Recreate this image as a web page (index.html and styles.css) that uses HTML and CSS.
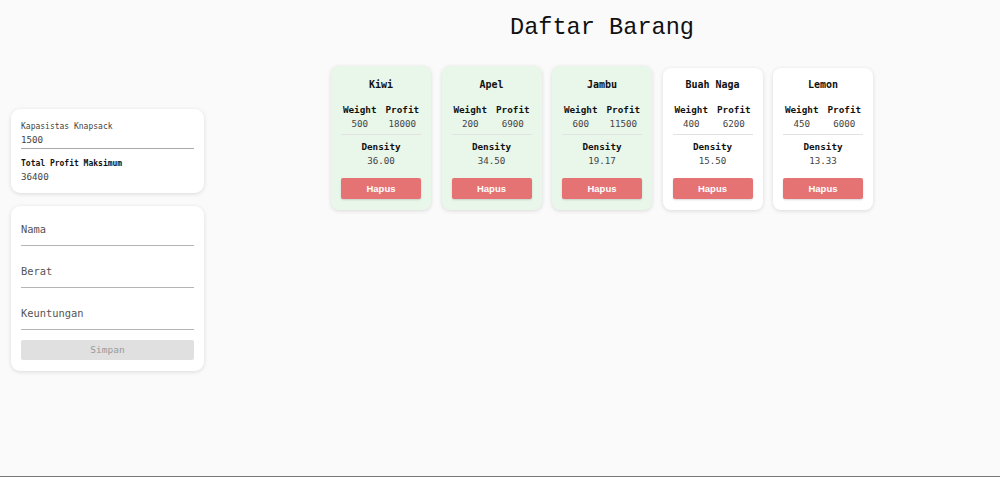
FILE: index.html
```html
<!DOCTYPE html>
<html lang="id">
<head>
<meta charset="utf-8">
<title>Daftar Barang</title>
<link rel="stylesheet" href="styles.css">
</head>
<body>
<div class="page">
  <aside class="side">
    <div class="panel summary">
      <div class="sum-label">Kapasistas Knapsack</div>
      <div class="sum-value underlined">1500</div>
      <div class="sum-label strong">Total Profit Maksimum</div>
      <div class="sum-value">36400</div>
    </div>
    <div class="panel form">
      <input class="field" type="text" placeholder="Nama">
      <input class="field" type="text" placeholder="Berat">
      <input class="field" type="text" placeholder="Keuntungan">
      <button class="save" disabled>Simpan</button>
    </div>
  </aside>
  <main class="main">
    <h1 class="title">Daftar Barang</h1>
    <div class="cards">
      <div class="card picked">
        <div class="card-title">Kiwi</div>
        <div class="stats">
          <div class="stat"><div class="stat-label">Weight</div><div class="stat-value">500</div></div>
          <div class="stat"><div class="stat-label">Profit</div><div class="stat-value">18000</div></div>
        </div>
        <div class="density"><div class="stat-label">Density</div><div class="stat-value">36.00</div></div>
        <button class="del">Hapus</button>
      </div>
      <div class="card picked">
        <div class="card-title">Apel</div>
        <div class="stats">
          <div class="stat"><div class="stat-label">Weight</div><div class="stat-value">200</div></div>
          <div class="stat"><div class="stat-label">Profit</div><div class="stat-value">6900</div></div>
        </div>
        <div class="density"><div class="stat-label">Density</div><div class="stat-value">34.50</div></div>
        <button class="del">Hapus</button>
      </div>
      <div class="card picked">
        <div class="card-title">Jambu</div>
        <div class="stats">
          <div class="stat"><div class="stat-label">Weight</div><div class="stat-value">600</div></div>
          <div class="stat"><div class="stat-label">Profit</div><div class="stat-value">11500</div></div>
        </div>
        <div class="density"><div class="stat-label">Density</div><div class="stat-value">19.17</div></div>
        <button class="del">Hapus</button>
      </div>
      <div class="card">
        <div class="card-title">Buah Naga</div>
        <div class="stats">
          <div class="stat"><div class="stat-label">Weight</div><div class="stat-value">400</div></div>
          <div class="stat"><div class="stat-label">Profit</div><div class="stat-value">6200</div></div>
        </div>
        <div class="density"><div class="stat-label">Density</div><div class="stat-value">15.50</div></div>
        <button class="del">Hapus</button>
      </div>
      <div class="card">
        <div class="card-title">Lemon</div>
        <div class="stats">
          <div class="stat"><div class="stat-label">Weight</div><div class="stat-value">450</div></div>
          <div class="stat"><div class="stat-label">Profit</div><div class="stat-value">6000</div></div>
        </div>
        <div class="density"><div class="stat-label">Density</div><div class="stat-value">13.33</div></div>
        <button class="del">Hapus</button>
      </div>
    </div>
  </main>
</div>
</body>
</html>
```

FILE: styles.css
```css
html, body {
  margin: 0;
  padding: 0;
  background: #fafafa;
  font-family: "DejaVu Sans Mono", "Liberation Mono", monospace;
  color: #111;
}

.page {
  display: flex;
  height: 100vh;
  box-sizing: border-box;
  border-bottom: 1px solid #777;
}

.side {
  width: 204px;
  flex: none;
  box-sizing: border-box;
  padding-left: 11px;
  padding-top: 3px;
  display: flex;
  flex-direction: column;
  justify-content: center;
  gap: 13px;
}

.panel {
  width: 193px;
  box-sizing: border-box;
  background: #fff;
  border-radius: 9px;
  box-shadow: 0 1px 4px rgba(0, 0, 0, 0.13);
}

.summary {
  padding: 13px 10px 10px;
}

.sum-label {
  font-size: 8px;
  line-height: 10px;
  color: #444;
}

.sum-label.strong {
  font-weight: bold;
  color: #111;
  margin-top: 10px;
}

.sum-value {
  font-size: 9.2px;
  line-height: 12px;
  color: #444;
  margin-top: 2px;
}

.sum-value.underlined {
  padding-bottom: 2px;
  border-bottom: 1px solid #aaa;
}

.form {
  padding: 7px 10px 11px;
  display: flex;
  flex-direction: column;
  gap: 9px;
}

.field {
  display: block;
  width: 100%;
  box-sizing: border-box;
  border: none;
  border-bottom: 1px solid #b5b5b5;
  background: transparent;
  padding: 10px 0 9px;
  margin: 0;
  font-family: inherit;
  font-size: 10.4px;
  line-height: 13px;
  height: 33px;
  color: #333;
  outline: none;
}

.field::placeholder {
  color: #555;
}

.save {
  margin-top: 1px;
  height: 20px;
  border: none;
  border-radius: 2px;
  background: #e0e0e0;
  color: #9a9a9a;
  font-family: inherit;
  font-size: 9.5px;
  padding: 0;
}

.main {
  flex: 1;
  display: flex;
  flex-direction: column;
  align-items: center;
}

.title {
  margin: 14px 0 0;
  font-family: "Liberation Mono", "DejaVu Sans Mono", monospace;
  font-weight: normal;
  font-size: 23.6px;
  line-height: 28px;
  color: #111;
}

.cards {
  margin-top: 24px;
  display: flex;
  align-items: flex-end;
  gap: 10.5px;
}

.card {
  width: 100px;
  box-sizing: border-box;
  padding: 11px 10px 11px;
  background: #fff;
  border-radius: 8px;
  box-shadow: 0 1px 4px rgba(0, 0, 0, 0.13);
  text-align: center;
}

.card.picked {
  background: #e9f6ea;
  padding-top: 13px;
}

.card-title {
  font-size: 10px;
  font-weight: bold;
  line-height: 12px;
}

.stats {
  margin-top: 13px;
  display: flex;
  justify-content: center;
  gap: 9px;
  padding-bottom: 4px;
  border-bottom: 1px solid #e2e2e2;
}

.stat-label {
  font-size: 9.3px;
  font-weight: bold;
  line-height: 12px;
}

.stat-value {
  font-size: 9.2px;
  line-height: 12px;
  color: #444;
  margin-top: 2px;
}

.density {
  margin-top: 6px;
}

.del {
  display: block;
  width: 100%;
  margin-top: 11px;
  height: 21px;
  border: none;
  border-radius: 2px;
  background: #e57373;
  color: #fff;
  font-family: "Liberation Sans", Arial, sans-serif;
  font-weight: bold;
  font-size: 9.5px;
  padding: 0;
  box-shadow: 0 1px 2px rgba(0, 0, 0, 0.15);
}
```
